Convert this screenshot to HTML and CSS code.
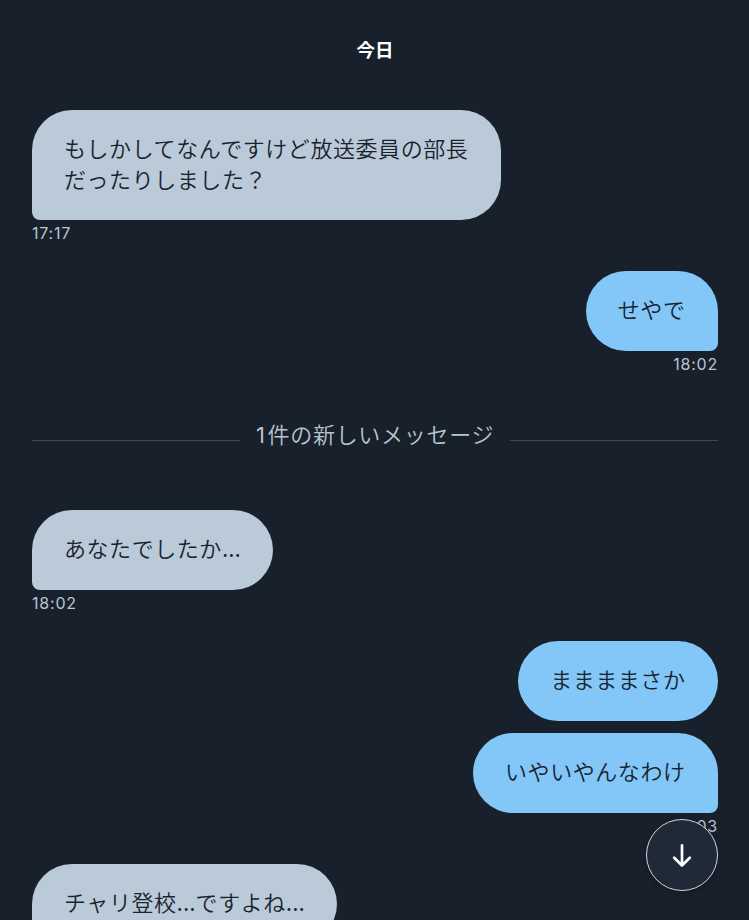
FILE: index.html
```html
<!DOCTYPE html>
<html lang="ja">
<head>
  <meta charset="UTF-8">
  <title>メッセージ</title>
  <link rel="stylesheet" href="styles.css">
</head>
<body>
<main class="chat">
  <h1 class="date">今日</h1>

  <div class="message received">
    <p class="bubble tail">もしかしてなんですけど放送委員の部長<br>だったりしました？</p>
    <time class="time">17:17</time>
  </div>

  <div class="message sent">
    <p class="bubble tail">せやで</p>
    <time class="time">18:02</time>
  </div>

  <div class="divider"><span class="divider-text"><span class="count">1</span>件の新しいメッセージ</span></div>

  <div class="message received">
    <p class="bubble tail">あなたでしたか<span class="dots">...</span></p>
    <time class="time">18:02</time>
  </div>

  <div class="message sent">
    <p class="bubble">ままままさか</p>
    <p class="bubble tail">いやいやんなわけ</p>
    <time class="time">18:03</time>
  </div>

  <div class="message received">
    <p class="bubble tail">チャリ登校<span class="dots">...</span>ですよね<span class="dots">...</span></p>
  </div>
</main>

<button class="scroll-button" aria-label="最新のメッセージへ">
  <svg class="arrow" width="24" height="28" viewBox="0 0 24 28">
    <path d="M12 4.3V24.3M4.2 16.7l7.8 7.8 7.8-7.8"/>
  </svg>
</button>
</body>
</html>
```

FILE: styles.css
```css
html, body {
    height: 100%;
    margin: 0;
    overflow: hidden;
}

body {
    background: #18202b;
    font-family: "Noto Sans CJK JP", sans-serif;
}

.chat {
    height: 920px;
    box-sizing: border-box;
    padding: 35px 31px 0 32px;
    overflow: hidden;

    display: flex;
    flex-direction: column;
}

.date {
    flex: none;
    margin: 0 0 47px;
    color: #fff;
    font-size: 18.5px;
    font-weight: 700;
    line-height: 28px;
    text-align: center;
}

.message {
    flex: none;
    margin-bottom: 23px;

    display: flex;
    flex-direction: column;
    align-items: flex-start;
}

.sent {
    align-items: flex-end;
}

.bubble {
    box-sizing: border-box;
    min-height: 80px;
    margin: 0;
    padding: 22px 32.5px 26px 32px;
    border-radius: 40px;
    background: #bbcad8;
    color: #18232f;
    font-size: 22px;
    font-weight: 350;
    line-height: 31px;
    letter-spacing: 0.56px;
    white-space: nowrap;
}

.bubble + .bubble {
    margin-top: 12px;
}

.sent .bubble {
    background: #83c7f8;
}

.received .tail {
    border-bottom-left-radius: 8px;
}

.sent .tail {
    border-bottom-right-radius: 8px;
}

.dots {
    font-family: Inter, sans-serif;
    font-weight: 400;
    font-size: 22px;
    line-height: 1;
    letter-spacing: 0;
}

.time {
    height: 28px;
    color: #b8c5d1;
    font-family: Inter, sans-serif;
    font-size: 16px;
    line-height: 26px;
    letter-spacing: 0.8px;
}

.divider {
    flex: none;
    height: 30px;
    margin: 19px 0 59px;

    display: flex;
    align-items: center;
    gap: 16px;
}

.divider::before, .divider::after {
    content: "";
    flex: 1;
    height: 1px;
    margin-top: 9px;
    background: #414852;
}

.divider-text {
    margin-top: -4px;
    color: #b8c5d1;
    font-size: 22px;
    font-weight: 350;
    line-height: 30px;
    letter-spacing: 0.7px;
}

.count {
    margin-right: 2px;
    font-family: Inter, sans-serif;
    font-weight: 400;
}

.scroll-button {
    position: absolute;
    top: 819px;
    left: 646px;
    width: 72px;
    height: 72px;
    padding: 0;
    border: 1px solid #d3d7dc;
    border-radius: 50%;
    background: #202938;
    box-shadow: 0 1px 5px rgba(0, 0, 0, 0.3);

    display: flex;
    align-items: center;
    justify-content: center;
}

.arrow {
    fill: none;
    stroke: #fff;
    stroke-width: 2.7;
    stroke-linecap: round;
    stroke-linejoin: round;
}
```
